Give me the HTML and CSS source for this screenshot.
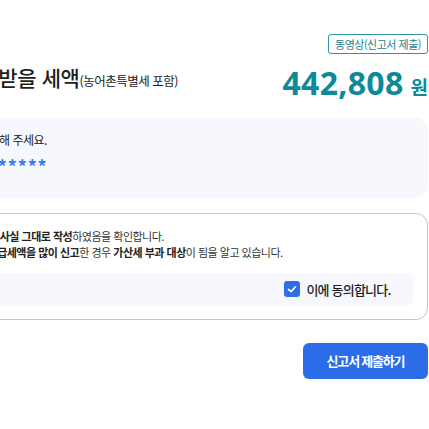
FILE: index.html
```html
<!DOCTYPE html>
<html lang="ko">
<head>
<meta charset="utf-8">
<title>환급 신고서 제출</title>
<link rel="stylesheet" href="styles.css">
</head>
<body>
<div class="page">
  <div class="panel">
    <div class="top">
      <span class="badge">동영상(신고서 제출)</span>
    </div>

    <div class="summary">
      <h2 class="title">환급 받을 세액<span class="sub">(농어촌특별세 포함)</span></h2>
      <div class="amount"><span class="num">442,808</span><span class="unit">원</span></div>
    </div>

    <div class="notice">
      <p class="notice-text">확인해 주세요.</p>
      <p class="mask">*******</p>
    </div>

    <div class="confirm">
      <p class="line">위 <b>사실 그대로 작성</b>하였음을 확인합니다.</p>
      <p class="line">환<b>급세액을 많이 신고</b>한 경우 <b>가산세 부과 대상</b>이 됨을 알고 있습니다.</p>
      <label class="agree">
        <span class="check">
          <svg viewBox="0 0 16 16" width="16" height="16"><polyline points="4.5,8.3 7,10.6 11.5,5.8" fill="none" stroke="#fff" stroke-width="1.6" stroke-linecap="round" stroke-linejoin="round"/></svg>
        </span>
        <span class="agree-text">이에 동의합니다.</span>
      </label>
    </div>

    <div class="actions">
      <button class="submit" type="button">신고서 제출하기</button>
    </div>
  </div>
</div>
</body>
</html>
```

FILE: styles.css
```css
* { box-sizing: border-box; }

html, body {
  margin: 0;
  padding: 0;
  background: #fff;
  overflow: hidden;
}

body {
  font-family: "Noto Sans CJK KR", "Noto Sans", sans-serif;
  color: #222;
}

p, h2 { margin: 0; }

/* the panel is wider than the window and is pinned to the right edge */
.page {
  display: flex;
  justify-content: flex-end;
  padding-right: 1px;
  width: 429px;
}

.panel {
  flex: 0 0 473px;
  width: 473px;
  padding-top: 34px;
}

.top {
  display: flex;
  justify-content: flex-end;
}

.badge {
  display: inline-flex;
  align-items: center;
  height: 20px;
  padding: 0 6px;
  border: 1.5px solid #2b95a3;
  border-radius: 3px;
  font-size: 11px;
  letter-spacing: -0.5px;
  color: #1f7f8c;
  line-height: 1;
}

.summary {
  display: flex;
  justify-content: space-between;
  align-items: flex-end;
  margin-top: 9px;
}

.title {
  font-size: 21px;
  line-height: 26px;
  font-weight: 500;
  letter-spacing: -0.4px;
  color: #1e1e1e;
  margin-bottom: 9px;
  white-space: nowrap;
}

.sub {
  font-size: 12.5px;
  font-weight: 400;
  letter-spacing: -0.5px;
  color: #222;
}

.amount {
  display: flex;
  align-items: baseline;
  gap: 7px;
  height: 40px;
  line-height: 40px;
  color: #0c8a99;
  font-weight: 700;
}

.num {
  font-family: "Noto Sans", sans-serif;
  font-size: 32px;
  letter-spacing: 0.3px;
}

.unit {
  font-size: 19px;
}

.notice {
  margin-top: 15px;
  height: 80px;
  padding: 13px 0 0 23px;
  background: #f6f8fe;
  border-radius: 12px;
}

.notice-text {
  font-size: 12px;
  line-height: 18px;
  letter-spacing: -0.5px;
  color: #222;
  white-space: nowrap;
}

.mask {
  margin-top: 8px;
  font-size: 18px;
  line-height: 18px;
  letter-spacing: 0.8px;
  color: #3b7cf0;
  font-weight: 700;
}

.confirm {
  margin-top: 15px;
  border: 1.5px solid #c6c6c6;
  border-radius: 12px;
  padding: 13.5px 13.5px 13.5px 31.5px;
}

.line {
  font-size: 11px;
  line-height: 16px;
  letter-spacing: -0.5px;
  color: #333;
  white-space: nowrap;
}

.line b {
  font-weight: 700;
  color: #222;
}

.agree {
  margin-top: 13px;
  height: 33px;
  display: flex;
  align-items: center;
  justify-content: flex-end;
  gap: 6px;
  padding-right: 23px;
  background: #f6f8fe;
  border-radius: 8px;
}

.check {
  width: 16px;
  height: 16px;
  border-radius: 3px;
  background: #2e6fe6;
  display: flex;
}

.agree-text {
  font-size: 13px;
  font-weight: 500;
  letter-spacing: -0.8px;
  color: #1e1e1e;
}

.actions {
  display: flex;
  justify-content: flex-end;
  margin-top: 22.5px;
}

.submit {
  width: 125px;
  height: 36px;
  border: 0;
  border-radius: 6px;
  background: #2b6de8;
  color: #fff;
  font-family: inherit;
  font-size: 13px;
  font-weight: 700;
  letter-spacing: -1.2px;
}
```
